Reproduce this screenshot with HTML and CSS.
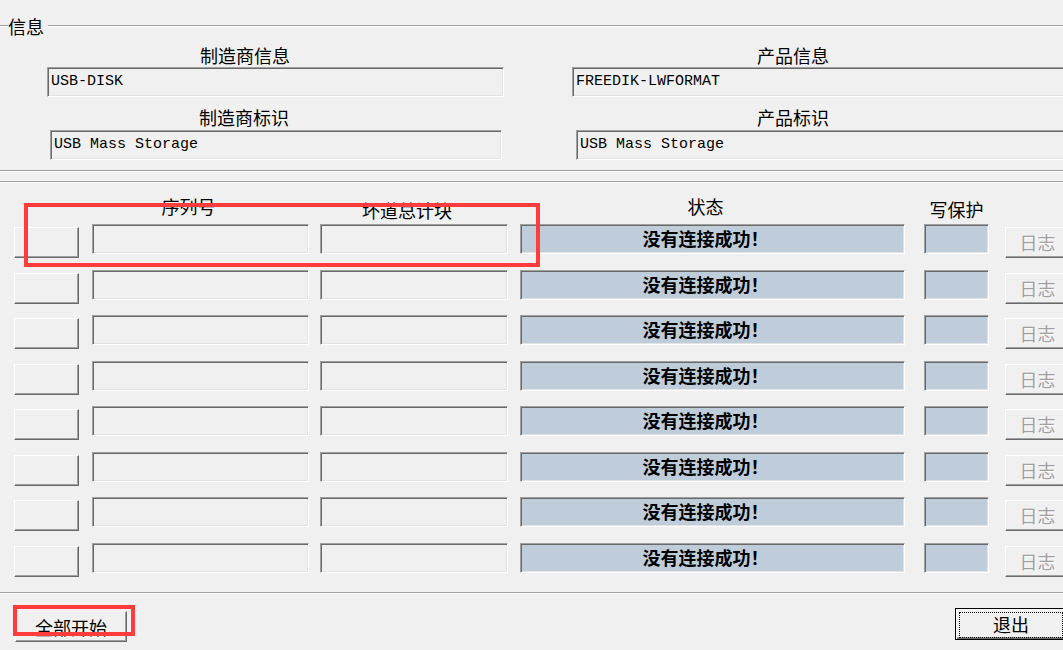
FILE: index.html
```html
<!DOCTYPE html>
<html lang="zh-CN">

<head>
    <meta charset="UTF-8">
    <title>量产工具</title>
    <link rel="stylesheet" href="styles.css">
</head>

<body>
    <div class="window">
        <!-- device info group -->
        <div class="group-title">
            <div class="rule rule-lead"></div>
            <span class="group-label">信息</span>
            <div class="rule"></div>
        </div>

        <div class="info">
            <div class="info-col info-left">
                <div class="info-label label-a">制造商信息</div>
                <div class="field field-info field-a">USB-DISK</div>
                <div class="info-label label-b">制造商标识</div>
                <div class="field field-info field-b">USB Mass Storage</div>
            </div>
            <div class="info-col info-right">
                <div class="info-label label-a">产品信息</div>
                <div class="field field-info field-a">FREEDIK-LWFORMAT</div>
                <div class="info-label label-b">产品标识</div>
                <div class="field field-info field-b">USB Mass Storage</div>
            </div>
        </div>

        <div class="rule sep-info"></div>
        <div class="rule sep-ports"></div>

        <!-- port table -->
        <div class="heads">
            <div class="col-btn"></div>
            <div class="col-serial head head-serial">序列号</div>
            <div class="col-bad head head-bad">坏道总计块</div>
            <div class="col-status head head-status">状态</div>
            <div class="col-wp head head-wp">写保护</div>
        </div>

        <div class="rows" id="rows"></div>

        <div class="rule sep-bottom"></div>

        <div class="footer">
            <button class="btn btn-start">全部开始</button>
            <button class="btn btn-exit"><span class="focus">退出</span></button>
        </div>

        <!-- annotation marks -->
        <div class="mark mark-head"></div>
        <div class="mark mark-start"></div>
    </div>

    <script>
        const PortCount = 8;
        const rowsElement = document.getElementById('rows');

        for (let i = 0; i < PortCount; i++) {
            const row = document.createElement('div');
            row.className = 'row';
            row.innerHTML = `
                <button class="btn col-btn port-btn"></button>
                <div class="field col-serial"></div>
                <div class="field col-bad"></div>
                <div class="field field-blue col-status status-text">没有连接成功！</div>
                <div class="field field-blue col-wp"></div>
                <button class="btn col-log log-btn" disabled>日志</button>
            `;
            rowsElement.appendChild(row);
        }
    </script>
</body>

</html>
```

FILE: styles.css
```css
/* Dialog base */
html, body {
    margin: 0;
    padding: 0;
    background: #f0f0f0;
    overflow: hidden;
}

.window {
    position: relative;
    display: flow-root;
    width: 1090px;
    height: 650px;
    font-family: "Noto Sans CJK SC", "Noto Sans", sans-serif;
    font-size: 18px;
    color: #000;
}

/* Etched lines */
.rule {
    flex: 1;
    height: 0;
    border-top: 1px solid #a0a0a0;
    border-bottom: 1px solid #fff;
}

.group-title {
    display: flex;
    align-items: center;
    height: 18px;
    margin-top: 17px;
}

.rule-lead {
    flex: 0 0 8px;
}

.group-label {
    line-height: 18px;
    padding-right: 4px;
}

/* Info fields */
.info {
    display: flex;
}

.info-left {
    width: 525px;
}

.info-right {
    width: 560px;
}

.info-label {
    line-height: 20px;
    height: 20px;
}

.info-left .label-a { margin-top: 10px; padding-left: 200px; }
.info-left .label-b { margin-top: 10px; padding-left: 199px; }
.info-right .label-a { margin-top: 10px; padding-left: 232px; }
.info-right .label-b { margin-top: 10px; padding-left: 232px; }

.field {
    box-sizing: border-box;
    height: 30px;
    background: #f0f0f0;
    border: 1px solid;
    border-color: #a0a0a0 #fff #fff #a0a0a0;
    box-shadow: inset 1px 1px 0 #696969, inset -1px -1px 0 #e3e3e3;
}

.field-info {
    font-family: "Liberation Mono", "DejaVu Sans Mono", monospace;
    font-size: 15px;
    line-height: 28px;
    padding-left: 3px;
    white-space: nowrap;
}

.info-left .field-a { margin-top: 2px; margin-left: 47px; width: 457px; }
.info-left .field-b { margin-top: 3px; margin-left: 50px; width: 452px; }
.info-right .field-a { margin-top: 2px; margin-left: 47px; width: 520px; }
.info-right .field-b { margin-top: 3px; margin-left: 51px; width: 520px; }

.sep-info {
    margin-top: 10px;
}

.sep-ports {
    margin-top: 9px;
}

/* Port table columns */
.heads,
.row {
    display: flex;
    align-items: flex-start;
    padding-left: 14px;
}

.col-btn { width: 65px; flex: none; }
.col-serial { width: 217px; margin-left: 13px; flex: none; }
.col-bad { width: 188px; margin-left: 11px; flex: none; }
.col-status { width: 385px; margin-left: 12px; flex: none; }
.col-wp { width: 65px; margin-left: 19px; flex: none; }
.col-log { width: 65px; margin-left: 16px; flex: none; }

.heads {
    height: 41px;
}

.head {
    box-sizing: border-box;
    text-align: center;
    line-height: 20px;
}

.head-serial { margin-top: 13px; padding-right: 24px; }
.head-bad { margin-top: 17px; padding-right: 14px; }
.head-status { margin-top: 13px; padding-right: 14px; }
.head-wp { margin-top: 16px; }

.row {
    height: 30px;
    margin-bottom: 15px;
}

.row:nth-child(odd) {
    margin-bottom: 16px;
}

.row:last-child {
    margin-bottom: 0;
}

.field-blue {
    background: #bfcdda;
}

.status-text {
    text-align: center;
    font-weight: bold;
    line-height: 27px;
    padding-right: 14px;
}

/* Buttons */
.btn {
    box-sizing: border-box;
    padding: 0;
    background: #f0f0f0;
    border: 1px solid;
    border-color: #fff #696969 #696969 #fff;
    box-shadow: inset -1px -1px 0 #a0a0a0;
    font-family: "Noto Sans CJK SC", "Noto Sans", sans-serif;
    font-size: 18px;
    color: #000;
}

.port-btn,
.log-btn {
    height: 31px;
    margin-top: 3px;
}

.log-btn {
    color: #a0a0a0;
    text-shadow: 1px 1px 0 #fff;
    line-height: 27px;
}

.sep-bottom {
    margin-top: 19px;
}

.footer {
    display: flex;
    align-items: flex-start;
    margin-top: 14px;
}

.btn-start {
    width: 112px;
    height: 31px;
    margin-top: 3px;
    margin-left: 15px;
    line-height: 28px;
    padding-top: 1px;
}

.btn-exit {
    width: 112px;
    height: 32px;
    margin-left: 828px;
    border: 1px solid #000;
    box-shadow: inset 1px 1px 0 #fff, inset -1px -1px 0 #696969, inset -2px -2px 0 #a0a0a0;
}

.focus {
    display: block;
    margin: 3px;
    height: 24px;
    line-height: 22px;
    border: 1px dotted #000;
}

/* Red annotation rectangles */
.mark {
    position: absolute;
    box-sizing: border-box;
    border: 4px solid #ff3c3c;
}

.mark-head {
    left: 24px;
    top: 203px;
    width: 516px;
    height: 64px;
}

.mark-start {
    left: 13px;
    top: 605px;
    width: 122px;
    height: 31px;
}
```
